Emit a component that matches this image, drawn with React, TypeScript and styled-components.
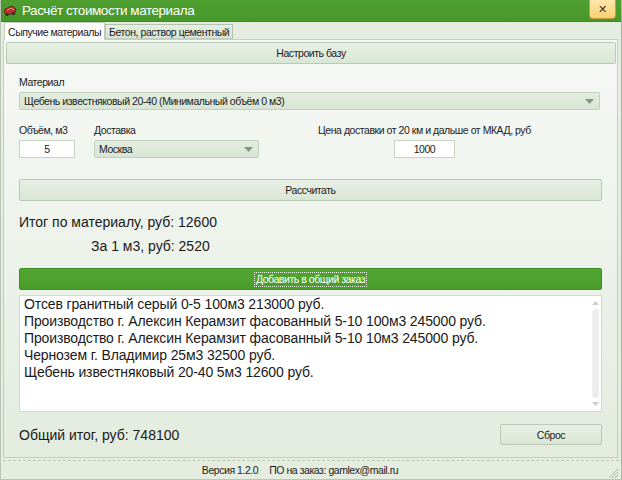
import styled, { createGlobalStyle, css } from 'styled-components';

const GlobalStyle = createGlobalStyle`
  html, body {
    margin: 0;
    padding: 0;
    background: #ffffff;
  }
  body {
    font-family: "Liberation Sans", Arial, sans-serif;
  }
`;

// narrow 11px UI text, close to the Tahoma of the original form
const smallText = css`
  font-family: "Liberation Sans", Arial, sans-serif;
  font-size: 10.5px;
  letter-spacing: -0.45px;
  color: #1c1c1c;
`;

const orderLines = [
  'Отсев гранитный серый 0-5 100м3 213000 руб.',
  'Производство г. Алексин Керамзит фасованный 5-10 100м3 245000 руб.',
  'Производство г. Алексин Керамзит фасованный 5-10 10м3 245000 руб.',
  'Чернозем г. Владимир 25м3 32500 руб.',
  'Щебень известняковый 20-40 5м3 12600 руб.',
];

const AppIcon = () => (
  <svg width="15" height="13" viewBox="0 0 15 13">
    <path d="M2 5 L9 2 L13 5 L12 9 L4 11 L1 8 Z" fill="#b8322a" stroke="#5a1a14" strokeWidth="0.8" />
    <path d="M4 6 L9 4 L11 6" fill="none" stroke="#f0a090" strokeWidth="0.9" />
    <circle cx="4" cy="10.5" r="1.6" fill="#2c2c2c" />
    <circle cx="10.5" cy="9.5" r="1.6" fill="#2c2c2c" />
  </svg>
);

const ArrowDown = () => (
  <svg width="9" height="5" viewBox="0 0 9 5">
    <path d="M0 0 L9 0 L4.5 5 Z" fill="#7f9a7b" />
  </svg>
);

const ScrollArrow = ({ up }: { up?: boolean }) => (
  <svg width="7" height="4" viewBox="0 0 7 4">
    <path d={up ? 'M0 4 L7 4 L3.5 0 Z' : 'M0 0 L7 0 L3.5 4 Z'} fill="#c9cfc8" />
  </svg>
);

const App = () => {
  return (
    <>
      <GlobalStyle />
      <Window>
        <TitleBar>
          <IconSlot>
            <AppIcon />
          </IconSlot>
          <Title>Расчёт стоимости материала</Title>
          <CloseButton>✕</CloseButton>
        </TitleBar>

        <Body>
          <TabStrip>
            <Tab $active>Сыпучие материалы</Tab>
            <Tab>Бетон, раствор цементный</Tab>
          </TabStrip>

          <TabPanel>
            <WideButton>Настроить базу</WideButton>

            <Form>
              <Label>Материал</Label>
              <Combo $width="581px">
                <span>Щебень известняковый 20-40 (Минимальный объём 0 м3)</span>
                <ArrowDown />
              </Combo>

              <FieldsRow>
                <Field>
                  <Label>Объём, м3</Label>
                  <TextBox $width="56px">5</TextBox>
                </Field>
                <Field $gap="19px">
                  <Label>Доставка</Label>
                  <Combo $width="165px">
                    <span>Москва</span>
                    <ArrowDown />
                  </Combo>
                </Field>
                <Field $gap="59px" $center>
                  <Label>Цена доставки от 20 км и дальше от МКАД, руб</Label>
                  <TextBox $width="61px">1000</TextBox>
                </Field>
              </FieldsRow>

              <FlatButton $top="21px">Рассчитать</FlatButton>

              <Result $top="12px">Итог по материалу, руб: 12600</Result>
              <Result $top="6px" $indent="72px">За 1 м3, руб: 2520</Result>

              <GreenButton>
                <FocusText>Добавить в общий заказ</FocusText>
              </GreenButton>

              <OrderList>
                <OrderLines>
                  {orderLines.map((line) => (
                    <OrderLine key={line}>{line}</OrderLine>
                  ))}
                </OrderLines>
                <ScrollBar>
                  <ScrollArrow up />
                  <ScrollThumb />
                  <ScrollArrow />
                </ScrollBar>
              </OrderList>

              <TotalRow>
                <Result>Общий итог, руб: 748100</Result>
                <ResetButton>Сброс</ResetButton>
              </TotalRow>
            </Form>
          </TabPanel>
        </Body>

        <StatusBar>
          <span>Версия 1.2.0</span>
          <span>ПО на заказ: gamlex@mail.ru</span>
          <Grip>
            <svg width="11" height="11" viewBox="0 0 11 11">
              <path d="M10 1 L1 10 M10 4 L4 10 M10 7 L7 10" stroke="#a8b4a5" strokeWidth="1" />
            </svg>
          </Grip>
        </StatusBar>
      </Window>
    </>
  );
};

const Window = styled.div`
  position: relative;
  width: 622px;
  height: 480px;
  box-sizing: border-box;
  display: flex;
  flex-direction: column;
  background: #e4ede0;
  border-left: 1px solid #b9c6b5;
  border-right: 1px solid #a9b7a6;
  border-bottom: 1px solid #b9c6b5;
  overflow: hidden;
`;

const TitleBar = styled.div`
  height: 22px;
  flex-shrink: 0;
  display: flex;
  align-items: center;
  background: linear-gradient(#4f9f30, #47982a);
  border-bottom: 1px solid #3f8a25;
  box-sizing: border-box;
`;

const IconSlot = styled.div`
  width: 15px;
  margin: 0 4px 0 2px;
  display: flex;
  align-items: center;
`;

const Title = styled.div`
  color: #ffffff;
  font-family: "Liberation Sans", Arial, sans-serif;
  font-size: 13.5px;
  letter-spacing: -0.45px;
  flex: 1;
  margin-top: -1px;
`;

const CloseButton = styled.div`
  align-self: flex-start;
  width: 27px;
  height: 19px;
  margin-right: 5px;
  box-sizing: border-box;
  display: flex;
  align-items: center;
  justify-content: center;
  background: linear-gradient(#ffe8ac, #f9cf72);
  border: 1px solid #c79c48;
  border-top: none;
  border-radius: 0 0 4px 4px;
  color: #333333;
  font-size: 11px;
  font-weight: bold;
  font-family: "DejaVu Sans", sans-serif;
`;

const Body = styled.div`
  flex: 1;
  display: flex;
  flex-direction: column;
  padding: 0 3px 0 2px;
  background:
    linear-gradient(115deg, transparent 80%, rgba(255, 255, 255, 0.35) 80.3%, transparent 80.6%),
    #e4ede0;
`;

const TabStrip = styled.div`
  height: 17px;
  display: flex;
  align-items: flex-end;
  padding-left: 1px;
`;

const Tab = styled.div<{ $active?: boolean }>`
  ${smallText};
  box-sizing: border-box;
  height: ${(p) => (p.$active ? '18px' : '15px')};
  margin-bottom: ${(p) => (p.$active ? '-1px' : '0')};
  padding: 0 3px;
  display: flex;
  align-items: center;
  background: ${(p) => (p.$active ? '#ffffff' : 'linear-gradient(#e6efe2, #d6e4d1)')};
  border: 1px solid ${(p) => (p.$active ? '#c3cfc0' : '#b3c2af')};
  border-bottom: ${(p) => (p.$active ? 'none' : '1px solid #c3cfc0')};
  position: relative;
  z-index: ${(p) => (p.$active ? 1 : 0)};
`;

const TabPanel = styled.div`
  height: 419px;
  box-sizing: border-box;
  display: flex;
  flex-direction: column;
  padding: 2px 1px 0 2px;
  background: linear-gradient(#f6f8f5 0%, #eef3ec 45%, #e3ecdf 100%);
  border: 1px solid #c3cfc0;
`;

const WideButton = styled.div`
  ${smallText};
  height: 22px;
  box-sizing: border-box;
  display: flex;
  align-items: center;
  justify-content: center;
  background: linear-gradient(#e8f0e5, #d9e6d5);
  border: 1px solid #b9c9b5;
  border-radius: 2px;
`;

const Form = styled.div`
  display: flex;
  flex-direction: column;
  padding: 12px 14px 0 13px;
`;

const Label = styled.div`
  ${smallText};
  line-height: 13px;
  margin-bottom: 3px;
`;

const Combo = styled.div<{ $width: string }>`
  ${smallText};
  width: ${(p) => p.$width};
  height: 18px;
  box-sizing: border-box;
  display: flex;
  align-items: center;
  justify-content: space-between;
  padding: 0 5px 0 4px;
  background: linear-gradient(#e3ede0, #d8e5d4);
  border: 1px solid #c2d0be;
  border-radius: 2px;
`;

const FieldsRow = styled.div`
  display: flex;
  align-items: flex-start;
  margin-top: 14px;
`;

const Field = styled.div<{ $gap?: string; $center?: boolean }>`
  display: flex;
  flex-direction: column;
  align-items: ${(p) => (p.$center ? 'center' : 'flex-start')};
  margin-left: ${(p) => p.$gap ?? '0'};
`;

const TextBox = styled.div<{ $width: string }>`
  ${smallText};
  width: ${(p) => p.$width};
  height: 18px;
  box-sizing: border-box;
  display: flex;
  align-items: center;
  justify-content: center;
  background: #ffffff;
  border: 1px solid #c9d3c6;
`;

const FlatButton = styled(WideButton)<{ $top?: string }>`
  margin-top: ${(p) => p.$top ?? '0'};
`;

const Result = styled.div<{ $top?: string; $indent?: string }>`
  font-size: 14px;
  line-height: 18px;
  color: #1a1a1a;
  margin-top: ${(p) => p.$top ?? '0'};
  padding-left: ${(p) => p.$indent ?? '0'};
`;

const GreenButton = styled.div`
  margin-top: 13px;
  height: 22px;
  box-sizing: border-box;
  display: flex;
  align-items: center;
  justify-content: center;
  background: linear-gradient(#52a531, #4a9d2b);
  border: 1px solid #3f8d25;
  border-radius: 2px;
`;

const FocusText = styled.span`
  ${smallText};
  color: #ffffff;
  line-height: 13px;
  padding: 0 1px;
  border: 1px dotted #e8f4e2;
`;

const OrderList = styled.div`
  margin-top: 5px;
  height: 117px;
  box-sizing: border-box;
  display: flex;
  background: #ffffff;
  border: 1px solid #d2dbcf;
`;

const OrderLines = styled.div`
  flex: 1;
  padding: 0 0 0 4px;
`;

const OrderLine = styled.div`
  font-size: 14px;
  line-height: 17px;
  letter-spacing: -0.13px;
  color: #1a1a1a;
  white-space: nowrap;
`;

const ScrollBar = styled.div`
  width: 11px;
  display: flex;
  flex-direction: column;
  align-items: center;
  justify-content: space-between;
  padding: 5px 0 5px;
`;

const ScrollThumb = styled.div`
  flex: 1;
  width: 7px;
  margin: 4px 0;
  border-radius: 4px;
  background: #eceeec;
`;

const TotalRow = styled.div`
  display: flex;
  align-items: center;
  justify-content: space-between;
  margin-top: 12px;
`;

const ResetButton = styled(WideButton)`
  width: 102px;
  height: 21px;
`;

const StatusBar = styled.div`
  ${smallText};
  position: relative;
  height: 18px;
  flex-shrink: 0;
  display: flex;
  align-items: center;
  justify-content: center;
  gap: 11px;
  margin: 0 2px;
  padding-right: 22px;
  border-top: 1px dashed #bcc7b9;
`;

const Grip = styled.div`
  position: absolute;
  right: 0;
  bottom: 0;
  line-height: 0;
`;

export default App;
